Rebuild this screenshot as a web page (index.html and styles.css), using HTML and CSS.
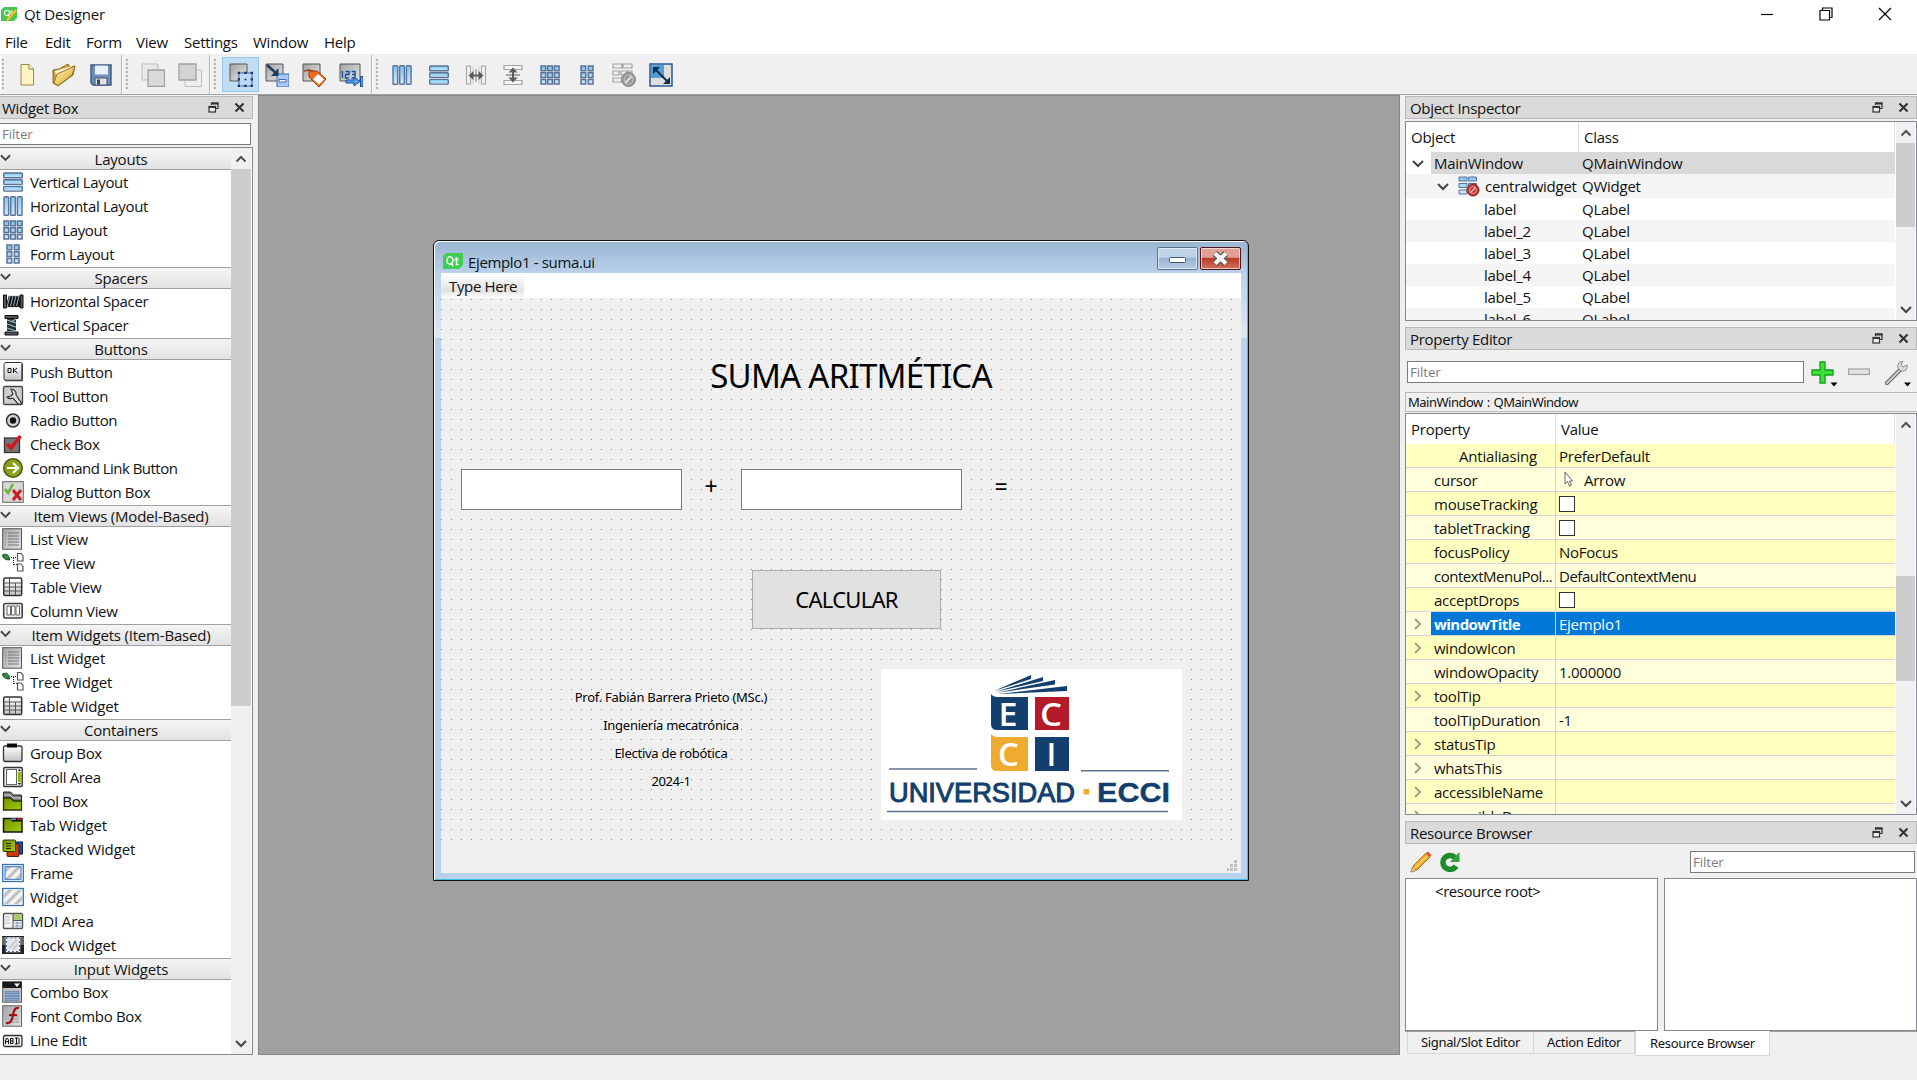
FILE: index.html
```html
<!DOCTYPE html>
<html lang="es">
<head>
<meta charset="utf-8">
<title>Qt Designer</title>
<link rel="stylesheet" href="styles.css">
</head>
<body>
<svg class="defs" width="0" height="0" aria-hidden="true">
  <defs>
    <linearGradient id="blue" x1="0" y1="0" x2="0" y2="1"><stop offset="0" stop-color="#7cc6f2"/><stop offset="1" stop-color="#cfeafb"/></linearGradient>
    <linearGradient id="grey" x1="0" y1="0" x2="1" y2="1"><stop offset="0" stop-color="#a4a4a4"/><stop offset="1" stop-color="#e4e4e4"/></linearGradient>
    <linearGradient id="light" x1="0" y1="0" x2="0" y2="1"><stop offset="0" stop-color="#fff"/><stop offset="1" stop-color="#c2c2c2"/></linearGradient>
    <linearGradient id="green" x1="0" y1="0" x2="1" y2="1"><stop offset="0" stop-color="#6f9400"/><stop offset="1" stop-color="#a5cc00"/></linearGradient>
    <linearGradient id="gold" x1="0" y1="0" x2="1" y2="1"><stop offset="0" stop-color="#fff3c0"/><stop offset="1" stop-color="#d9a520"/></linearGradient>
    <pattern id="hatch" width="7" height="7" patternUnits="userSpaceOnUse" patternTransform="rotate(45)"><rect width="7" height="7" fill="#f4f4f4"/><rect width="3.2" height="7" fill="#c0c0c0"/></pattern>
    <symbol id="vlay" viewBox="0 0 22 22"><g fill="url(#blue)" stroke="#5c7296" stroke-width="1.4"><rect x="1.700" y="2" width="18.600" height="4.700" rx=".8"/><rect x="1.700" y="8.700" width="18.600" height="4.700" rx=".8"/><rect x="1.700" y="15.400" width="18.600" height="4.700" rx=".8"/></g></symbol>
    <symbol id="hlay" viewBox="0 0 22 22"><g fill="url(#blue)" stroke="#5c7296" stroke-width="1.4"><rect x="2" y="1.700" width="4.700" height="18.600" rx=".8"/><rect x="8.700" y="1.700" width="4.700" height="18.600" rx=".8"/><rect x="15.400" y="1.700" width="4.700" height="18.600" rx=".8"/></g></symbol>
    <symbol id="glay" viewBox="0 0 22 22"><g fill="url(#blue)" stroke="#5c7296" stroke-width="1.5"><path d="M2 2h4.700v4.700H2zM8.700 2h4.700v4.700H8.700zM15.400 2h4.700v4.700h-4.700zM2 8.700h4.700v4.700H2zM8.700 8.700h4.700v4.700H8.700zM15.400 8.700h4.700v4.700h-4.700zM2 15.400h4.700v4.700H2zM8.700 15.400h4.700v4.700H8.700zM15.400 15.400h4.700v4.700h-4.700z"/></g></symbol>
    <symbol id="flay" viewBox="0 0 22 22"><g fill="url(#blue)" stroke="#5c7296" stroke-width="1.5"><path d="M5 2h4.700v4.700H5zM12.300 2H17v4.700h-4.700zM5 8.700h4.700v4.700H5zM12.300 8.700H17v4.700h-4.700zM5 15.400h4.700v4.700H5zM12.300 15.400H17v4.700h-4.700z"/></g></symbol>
    <symbol id="hspc" viewBox="0 0 22 22"><path d="M1.500 5h3v13h-3zM18 5h3v13h-3z" fill="#555" stroke="#111"/><path d="M5 17L8 6v11L11 6v11L14 6v11L17 6v11" fill="none" stroke="#111" stroke-width="2.600"/><path d="M5 17L8 6M8.500 16L11 6M11.500 16L14 6M14.500 16L17 6" stroke="#9db9c6"/></symbol>
    <symbol id="vspc" viewBox="0 0 22 22"><path d="M3 1.500h13v3H3zM3 18h13v3H3z" fill="#555" stroke="#111"/><path d="M5 5h9v12H5z" fill="#26323a"/><path d="M5 6l9 3M5 10l9 3M5 14l9 3M14 5l-5 3" stroke="#9db9c6" stroke-width="1.300"/></symbol>
    <symbol id="push" viewBox="0 0 22 22"><rect x="2" y="1.500" width="18.500" height="18" rx="2" fill="url(#light)" stroke="#333"/><path d="M20 3v16.500H3" fill="none" stroke="#444" stroke-width="1.500"/><path d="M6 7.500h3v4H6zM11.500 7v5M15 7l-3 2.500L15.500 12" fill="none" stroke="#111"/></symbol>
    <symbol id="tool" viewBox="0 0 22 22"><rect x="1.500" y="1.500" width="19" height="18" rx="1.500" fill="#cfcfcf" stroke="#444" stroke-width="1.300"/><path d="M9 4a5 5 0 0 1 5 6l6 9-4 0-5-6a5 5 0 0 1-6-1l4-1 2-2z" fill="#e4e4e4" stroke="#333" stroke-width="1.200"/></symbol>
    <symbol id="radio" viewBox="0 0 22 22"><circle cx="11" cy="11.500" r="6.500" fill="#d4d4d4" stroke="#333" stroke-width="1.500"/><circle cx="11" cy="11.500" r="3.200" fill="#151515"/></symbol>
    <symbol id="check" viewBox="0 0 22 22"><rect x="2.500" y="5" width="15" height="14.500" fill="#777" stroke="#333" stroke-width="1.300"/><path d="M5 11l4 4L18.500 3" fill="none" stroke="#d3161c" stroke-width="3.600"/></symbol>
    <symbol id="cmd" viewBox="0 0 22 22"><circle cx="11" cy="11" r="9.300" fill="#87a31b" stroke="#3c4d05" stroke-width="1.300"/><path d="M5 11h10M11 6l5 5-5 5" fill="none" stroke="#fff" stroke-width="2.200"/></symbol>
    <symbol id="dlg" viewBox="0 0 22 22"><rect x=".7" y=".7" width="20.600" height="20.600" fill="#d8d8d8" stroke="#666"/><path d="M3 8l3 4 5-9" fill="none" stroke="#67b42b" stroke-width="2.400"/><path d="M11 9l8 10M19 9l-8 10" stroke="#c91c26" stroke-width="3"/></symbol>
    <symbol id="list" viewBox="0 0 22 22"><rect x=".7" y=".7" width="18.800" height="20.500" fill="url(#grey)" stroke="#555"/><path d="M3 5h1M6 5h11M3 8h1M6 8h11M3 11h1M6 11h11M3 14h1M6 14h11M3 17h1M6 17h11" stroke="#777"/></symbol>
    <symbol id="tree" viewBox="0 0 22 22"><path d="M.5 3c4-2 7 0 7 5-4 0-7-2-7-5z" fill="#2d8f3c" stroke="#17491e"/><path d="M9 5.500h5M11.500 6v8M12 12.500h3" stroke="#222" stroke-dasharray="1 1"/><path d="M15.500 1.500h3.500l2 2.500v5h-5.500zM15.500 12h3.500l2 2.500v4.500h-5.500z" fill="#fff" stroke="#555" stroke-width="1.200"/></symbol>
    <symbol id="table" viewBox="0 0 22 22"><rect x="1.700" y="2" width="18" height="17.500" rx="1.500" fill="url(#light)" stroke="#333" stroke-width="1.500"/><path d="M2 7h17M7.500 2v17M13.500 7v12M2 11h17M2 15h17" stroke="#555"/></symbol>
    <symbol id="col" viewBox="0 0 22 22"><rect x="1.700" y="3.500" width="18.500" height="14.500" rx="1.500" fill="#eee" stroke="#444" stroke-width="1.600"/><path d="M5 6h3.500v9H5zM9.500 6h3.500v9H9.500zM14 6h3.500v9H14z" fill="#fff" stroke="#666"/></symbol>
    <symbol id="group" viewBox="0 0 22 22"><rect x="1.500" y="4" width="18.500" height="15.500" rx="1.500" fill="url(#light)" stroke="#333" stroke-width="1.300"/><rect x="5" y="1.500" width="10" height="4" fill="#0a0a0a"/></symbol>
    <symbol id="scroll" viewBox="0 0 22 22"><rect x="1.700" y="1.500" width="18.500" height="19" rx="1" fill="#eee" stroke="#333" stroke-width="1.400"/><rect x="4.500" y="3.500" width="10" height="15" fill="#fff" stroke="#666"/><rect x="16" y="6" width="2.800" height="10" fill="#8db600"/><path d="M16 5l1.400-2L19 5zM16 17l1.400 2L19 17z"/></symbol>
    <symbol id="toolbox" viewBox="0 0 22 22"><path d="M1.500 2h7l3 3h8v14.500h-18z" fill="#777" stroke="#222"/><path d="M1.500 8h7l3 3h8v9h-18z" fill="url(#green)" stroke="#263300" stroke-width="1.300"/><path d="M2 5h6l3 3h8" fill="none" stroke="#ddd"/></symbol>
    <symbol id="tab" viewBox="0 0 22 22"><rect x="1.500" y="4.500" width="18.500" height="13.500" fill="url(#green)" stroke="#111" stroke-width="1.500"/><path d="M8 4h12v3.500H10z" fill="#111"/><path d="M9 4.500h5V6H9z" fill="#5a9be0"/><path d="M15 4.500h5V6h-5z" fill="#d22"/></symbol>
    <symbol id="stack" viewBox="0 0 22 22"><rect x="12" y="4" width="8.500" height="12" fill="#1546b8" stroke="#0b1f52"/><rect x="5" y="6" width="12" height="12.500" rx="1" fill="#c63c06" stroke="#551a00"/><rect x="1" y="2" width="12.500" height="11.500" rx="1" fill="url(#green)" stroke="#2d3d00"/><path d="M4 5.500h5M4 8h5M4 10.500h5" stroke="#222"/></symbol>
    <symbol id="frame" viewBox="0 0 22 22"><rect x=".7" y="2.500" width="20.600" height="17" fill="#fff" stroke="#3172bd" stroke-width="1.300"/><rect x="3" y="4.700" width="16" height="12.600" fill="url(#hatch)" stroke="#3172bd"/></symbol>
    <symbol id="widget" viewBox="0 0 22 22"><rect x=".7" y="2.500" width="20.600" height="17" fill="#fff" stroke="#3172bd" stroke-width="1.300"/><rect x="2" y="3.800" width="18" height="14.400" fill="url(#hatch)"/></symbol>
    <symbol id="mdi" viewBox="0 0 22 22"><rect x="1.500" y="3.500" width="19" height="15" rx="1" fill="#f4f4f4" stroke="#555" stroke-width="1.400"/><path d="M11 4h9v6h-9z" fill="#a9cc6b"/><path d="M11 4v14M11 10.500h9" stroke="#555"/><path d="M3 7h5M3 10h5M3 13h5" stroke="#bbb"/><path d="M12.500 13h7M12.500 16h7M15 11.500v6" stroke="#7d9bd0"/></symbol>
    <symbol id="dock" viewBox="0 0 22 22"><rect y="2" width="22" height="18" fill="#222"/><path d="M0 3h22v8H0z" fill="#666"/><rect x="4.500" y="4" width="13" height="13.500" fill="#e6e6e6" stroke="#fff" stroke-width="1.500"/><path d="M7 14l8-8M11 15l5-5" stroke="#ccc" stroke-width="2"/><rect x="4.500" y="4" width="13" height="13.500" fill="none" stroke="#356eb5" stroke-dasharray="2 2"/></symbol>
    <symbol id="combo" viewBox="0 0 22 22"><rect x=".7" y=".7" width="18.800" height="20.500" fill="#bfbfbf" stroke="#555"/><path d="M.5 1h19v6H.5z" fill="#16191d"/><path d="M12 2.500h6l-3 3.500z" fill="#fff"/><path d="M3 10.500h14v2H3zM3 14h14v2H3zM3 17.500h14v2H3z" fill="#7fa7dd" stroke="#47699a" stroke-width=".5"/></symbol>
    <symbol id="fcombo" viewBox="0 0 22 22"><rect x=".7" y=".7" width="18.800" height="20.500" fill="url(#grey)" stroke="#666"/><path d="M3 11h14M3 14h14M3 17h14" stroke="#aaa" stroke-width="1.500"/><path d="M17 3c-4-1-5 2-6 7-1 6-3 9-7 8M7 10h8" fill="none" stroke="#9c1218" stroke-width="2.200"/></symbol>
    <symbol id="ledit" viewBox="0 0 22 22"><rect x="1.500" y="6.500" width="18.500" height="11" rx="1.500" fill="#eee" stroke="#333" stroke-width="1.300"/><path d="M3.500 15v-4l1.500-2 1.500 2v4M3.500 12.500h3M8.500 9.500v5M8.500 9.500h2.500v5H8.500M8.500 12H11M13 9h3M14.500 9v6M13 15h3M17 9v6" fill="none" stroke="#111"/></symbol>
    <symbol id="down" viewBox="0 0 12 8"><path d="M1 1l5 5 5-5" fill="none" stroke="#444" stroke-width="2"/></symbol>
    <symbol id="up" viewBox="0 0 12 8"><path d="M1.500 6.500L6 2l4.500 4.500" fill="none" stroke="#505050" stroke-width="2"/></symbol>
    <symbol id="right" viewBox="0 0 8 12"><path d="M1 1l5 5-5 5" fill="none" stroke="#a0a08a" stroke-width="2"/></symbol>
    <symbol id="float" viewBox="0 0 11 11"><path d="M3.500 3V1h6.500v5.500H8" fill="none" stroke="#333" stroke-width="1.200"/><path d="M3 1.500h7.500" stroke="#333" stroke-width="2"/><rect x="1" y="4.500" width="6.500" height="5.500" fill="#eee" stroke="#333" stroke-width="1.200"/><path d="M1 5h6.500" stroke="#333" stroke-width="2"/></symbol>
    <symbol id="close" viewBox="0 0 11 11"><path d="M1.500 1.500l8 8M9.500 1.500l-8 8" stroke="#333" stroke-width="2.100"/></symbol>
    <symbol id="new" viewBox="0 0 24 24"><path d="M6 1.500h8l4.500 4.500v16H6z" fill="#fff5c0" stroke="#a08a4a"/><path d="M14 1.500V6h4.500" fill="#fffdf0" stroke="#887239"/></symbol>
    <symbol id="open" viewBox="0 0 24 24"><path d="M1 7l6-1 9-5 2 3 5-1-2 9-15 11-5-3z" fill="#c9a03d" stroke="#8a6a1c"/><path d="M3 8l17-5-1 5L5 17z" fill="#fff6d8"/><path d="M2 20L5 11 23 3l-3 9L6 22.500z" fill="url(#gold)" stroke="#9b7820"/></symbol>
    <symbol id="save" viewBox="0 0 24 24"><path d="M2 2h20v20H4l-2-2z" fill="#6f8fb8" stroke="#3a5580" stroke-width="1.400"/><path d="M6 2.500h13v9H6z" fill="#e8f1f8"/><path d="M6 15h12v7H6z" fill="#e4e4e4" stroke="#3c5070"/><path d="M8 16.500h3v5H8z" fill="#37475e"/></symbol>
    <symbol id="front" viewBox="0 0 24 24"><path d="M1 1h16v16H1z" fill="#e9e9e9" stroke="#bdbdbd"/><path d="M7 7h16.500v16.500H7z" fill="#dadada" stroke="#a0a0a0" stroke-width="1.300"/></symbol>
    <symbol id="back" viewBox="0 0 24 24"><path d="M7 7h16.500v16.500H7z" fill="#eee" stroke="#bdbdbd"/><path d="M1 1h17v16H1z" fill="#d3d3d3" stroke="#a0a0a0" stroke-width="1.300"/></symbol>
    <symbol id="ewid" viewBox="0 0 24 24"><path d="M1 1h17v17H1z" fill="url(#grey)" stroke="#555"/><path d="M10 10h13v13H10z" fill="#bcd8fb" stroke="#356bb5"/><path d="M8.700 8.700h2.300v2.300H8.700zM15.300 8.700h2.300v2.300h-2.300zM21.700 8.700H24v2.300h-2.300zM8.700 15.300h2.300v2.300H8.700zM21.700 15.300H24v2.300h-2.300zM8.700 21.700h2.300V24H8.700zM15.300 21.700h2.300V24h-2.300zM21.700 21.700H24V24h-2.300z" fill="#17305c"/><path d="M15.700 15.700h1.600v1.600h-1.600z" fill="#123"/></symbol>
    <symbol id="esig" viewBox="0 0 24 24"><path d="M1 1h17v17H1z" fill="url(#grey)" stroke="#555"/><path d="M12 11h12v13H12z" fill="#a9c8f6" stroke="#3b6dba"/><path d="M14 16.500h7v2.500h-7z" fill="#fff" stroke="#3b6dba"/><path d="M2 2l10 9" stroke="#1d3c63" stroke-width="2.600"/><path d="M13.500 5v8H6z" fill="#1d3c63"/></symbol>
    <symbol id="ebud" viewBox="0 0 24 24"><path d="M1 1h17v17H1z" fill="url(#grey)" stroke="#555"/><path d="M2 8l5-1 10 3" fill="none" stroke="#8c4a26" stroke-width="1.400"/><path d="M7 8h8l9 8-7 8L7 14z" fill="#f26a22" stroke="#9d3b0c"/><path d="M16 11l6 5.500-5 5-6-5.500z" fill="#fff"/></symbol>
    <symbol id="etab" viewBox="0 0 24 24"><path d="M1 1h20v17H1z" fill="url(#grey)" stroke="#555"/><path d="M3.500 8v7M2.500 9h1M6.500 8.500h3.500v3H6.500V15H10M12.500 8.500H16V15h-3.500M13 11.500h3" fill="none" stroke="#1650a0" stroke-width="1.400"/><path d="M7 17h8v-3l6 4.500L15 23v-3H7zM21.500 13.500H24V24h-2.500z" fill="#5b9cf0" stroke="#174b94"/></symbol>
    <symbol id="hsplit" viewBox="0 0 22 22"><path d="M1.500 2h4v18h-4zM16.500 2h4v18h-4z" fill="#f4f4f4" stroke="#a6a6a6" stroke-width="1.200"/><path d="M8 2v18M14 2v18" stroke="#ccc"/><path d="M3.500 11.500l5-4.500v3.500h5V7l5 4.500-5 4.500v-3.500h-5V16zM10.600 5h.8v13h-.8z" fill="#5c5c5c"/></symbol>
    <symbol id="vsplit" viewBox="0 0 22 22"><path d="M2 1.500h18v4H2zM2 16.500h18v4H2z" fill="#f4f4f4" stroke="#a6a6a6" stroke-width="1.200"/><path d="M11 3.500l4.500 5H12v5h3.500L11 18.500l-4.500-5H10v-5H6.500zM4 10.600h14v.8H4z" fill="#5c5c5c"/></symbol>
    <symbol id="brk" viewBox="0 0 24 24"><path d="M1 1h9v4H1zM11 1h9v4h-9zM1 8h6v4H1zM9 8h6v4H9zM1 15h9v4H1zM16 8h4v4h-4z" fill="#eee" stroke="#a2a2a2" stroke-width="1.200"/><circle cx="16.500" cy="16.500" r="7" fill="#999" stroke="#868686"/><path d="M13 20l7-7" stroke="#ddd" stroke-width="2"/><circle cx="16.500" cy="16.500" r="4.500" fill="none" stroke="#c8c8c8"/></symbol>
    <symbol id="adj" viewBox="0 0 24 24"><path d="M1 1h22v22H1z" fill="#dedede" stroke="#245a92" stroke-width="1.500"/><path d="M2 2h13v13H2z" fill="#549fd2"/><path d="M7 7l12 12" stroke="#082e52" stroke-width="2"/><path d="M4 4h7l-7 7zM21 21v-7l-7 7z" fill="#082e52"/></symbol>
    <symbol id="cbrk" viewBox="0 0 22 22"><path d="M1 2h8v4H1zM10.500 2h8v4h-8zM1 8.500h8v4H1zM1 15h8v4H1zM10.500 8.500h8v4h-8z" fill="url(#blue)" stroke="#5c7296"/><circle cx="15" cy="15" r="6" fill="#c2342f" stroke="#852420"/><circle cx="15" cy="15" r="3.500" fill="none" stroke="#e9a19c"/><path d="M12.500 17.500l5-5" stroke="#eec0bc" stroke-width="1.500"/></symbol>
  </defs>
</svg>

<div class="app">
  <header class="titlebar">
    <svg class="app-icon" viewBox="0 0 17 15"><path d="M3 0h13v11l-3 3H0V3z" fill="#41c854"/><circle cx="6" cy="6" r="2.600" fill="none" stroke="#fff" stroke-width="1.300"/><path d="M7 8l1 1.500M10.500 3v6M9 5h3" stroke="#fff"/><path d="M5 14l1-3 8-9 2 2-8 9z" fill="#f1c232" stroke="#c69a28" stroke-width=".5"/></svg>
    <span class="app-name">Qt Designer</span>
    <div class="win-ctl">
      <svg viewBox="0 0 14 14"><path d="M1 7.500h12" stroke="#000" stroke-width="1.200"/></svg>
      <svg viewBox="0 0 14 14"><path d="M1 3.500h9.500V13H1zM3.500 3.500V1H13v9.500h-2.500" fill="none" stroke="#000" stroke-width="1.200"/></svg>
      <svg viewBox="0 0 14 14"><path d="M1 1l12 12M13 1L1 13" stroke="#000" stroke-width="1.200"/></svg>
    </div>
  </header>
  <nav class="menubar"><span class="m1">File</span><span class="m2">Edit</span><span class="m3">Form</span><span class="m4">View</span><span class="m5">Settings</span><span class="m6">Window</span><span>Help</span></nav>
  <div class="toolbar">
    <div class="tgroup g1"><i class="grip"></i><svg><use href="#new"/></svg><svg><use href="#open"/></svg><svg><use href="#save"/></svg></div>
    <div class="tgroup g2"><i class="grip"></i><svg><use href="#front"/></svg><svg><use href="#back"/></svg></div>
    <div class="tgroup g3"><i class="grip"></i><span class="sel"><svg><use href="#ewid"/></svg></span><svg><use href="#esig"/></svg><svg><use href="#ebud"/></svg><svg><use href="#etab"/></svg></div>
    <div class="tgroup g4"><i class="grip"></i><svg><use href="#hlay"/></svg><svg><use href="#vlay"/></svg><svg><use href="#hsplit"/></svg><svg><use href="#vsplit"/></svg><svg><use href="#glay"/></svg><svg><use href="#flay"/></svg><svg><use href="#brk"/></svg><svg><use href="#adj"/></svg></div>
  </div>

  <main class="work">
    <aside class="left">
      <div class="dock-title wb-title"><span>Widget Box</span><svg><use href="#float"/></svg><svg><use href="#close"/></svg></div>
      <div class="field wb-filter">Filter</div>
      <div class="wb">
        <div class="wb-list">
          <h3><svg><use href="#down"/></svg>Layouts</h3>
          <p><svg><use href="#vlay"/></svg>Vertical Layout</p>
          <p><svg><use href="#hlay"/></svg>Horizontal Layout</p>
          <p><svg><use href="#glay"/></svg>Grid Layout</p>
          <p><svg><use href="#flay"/></svg>Form Layout</p>
          <h3><svg><use href="#down"/></svg>Spacers</h3>
          <p><svg><use href="#hspc"/></svg>Horizontal Spacer</p>
          <p><svg><use href="#vspc"/></svg>Vertical Spacer</p>
          <h3><svg><use href="#down"/></svg>Buttons</h3>
          <p><svg><use href="#push"/></svg>Push Button</p>
          <p><svg><use href="#tool"/></svg>Tool Button</p>
          <p><svg><use href="#radio"/></svg>Radio Button</p>
          <p><svg><use href="#check"/></svg>Check Box</p>
          <p class="tight"><svg><use href="#cmd"/></svg>Command Link Button</p>
          <p><svg><use href="#dlg"/></svg>Dialog Button Box</p>
          <h3><svg><use href="#down"/></svg>Item Views (Model-Based)</h3>
          <p><svg><use href="#list"/></svg>List View</p>
          <p><svg><use href="#tree"/></svg>Tree View</p>
          <p><svg><use href="#table"/></svg>Table View</p>
          <p><svg><use href="#col"/></svg>Column View</p>
          <h3><svg><use href="#down"/></svg>Item Widgets (Item-Based)</h3>
          <p class="wide"><svg><use href="#list"/></svg>List Widget</p>
          <p class="wide"><svg><use href="#tree"/></svg>Tree Widget</p>
          <p class="wide"><svg><use href="#table"/></svg>Table Widget</p>
          <h3><svg><use href="#down"/></svg>Containers</h3>
          <p><svg><use href="#group"/></svg>Group Box</p>
          <p><svg><use href="#scroll"/></svg>Scroll Area</p>
          <p><svg><use href="#toolbox"/></svg>Tool Box</p>
          <p class="wide"><svg><use href="#tab"/></svg>Tab Widget</p>
          <p class="wide"><svg><use href="#stack"/></svg>Stacked Widget</p>
          <p><svg><use href="#frame"/></svg>Frame</p>
          <p class="wide"><svg><use href="#widget"/></svg>Widget</p>
          <p class="wide"><svg><use href="#mdi"/></svg>MDI Area</p>
          <p class="wide"><svg><use href="#dock"/></svg>Dock Widget</p>
          <h3><svg><use href="#down"/></svg>Input Widgets</h3>
          <p><svg><use href="#combo"/></svg>Combo Box</p>
          <p><svg><use href="#fcombo"/></svg>Font Combo Box</p>
          <p><svg><use href="#ledit"/></svg>Line Edit</p>
        </div>
        <div class="sbar"><svg><use href="#up"/></svg><i class="t-wb"></i><b></b><svg><use href="#down"/></svg></div>
      </div>
    </aside>

    <section class="canvas">
      <div class="subwin">
        <div class="sub-title">
          <svg class="qt" viewBox="0 0 20 16"><path d="M3 0h17v12l-4 4H0V3z" fill="#41cd52"/><ellipse cx="7" cy="7.500" rx="3" ry="3.700" fill="none" stroke="#fff" stroke-width="1.500"/><path d="M8 10l2 3M13.500 4v7.500h2M11.500 6.500h4" fill="none" stroke="#fff" stroke-width="1.500"/></svg>
          <span>Ejemplo1 - suma.ui</span>
          <div class="wbtn min"><svg viewBox="0 0 39 21"><rect x="11.500" y="9.500" width="16" height="5" rx="1" fill="#fff" stroke="#4e5866"/></svg></div>
          <div class="wbtn cls"><svg viewBox="0 0 39 21"><path d="M14 5.500l11 10M25 5.500l-11 10" stroke="#55535c" stroke-width="6.500"/><path d="M14 5.500l11 10M25 5.500l-11 10" stroke="#f4f4f4" stroke-width="4.300"/></svg></div>
        </div>
        <div class="form">
          <div class="form-menu"><span>Type Here</span></div>
          <div class="grid-area">
            <div class="f-title">SUMA ARITMÉTICA</div>
            <div class="inp in1"></div><div class="op plus">+</div>
            <div class="inp in2"></div><div class="op eq">=</div>
            <div class="calc">CALCULAR</div>
            <div class="credits"><div>Prof. Fabián Barrera Prieto (MSc.)</div><div>Ingeniería mecatrónica</div><div>Electiva de robótica</div><div class="yr">2024-1</div></div>
            <svg class="logo" viewBox="0 0 301 151">
              <rect width="301" height="151" fill="#fff"/>
              <g fill="#123f6e">
                <path d="M113 22l37-16v4zM114 23l48-15v4zM115 24l59-13v4.500zM117 25l69-8v5z"/>
                <path d="M110 25q2 3 7 3h30v33h-31q-6 0-6-6zM154 68h34v34h-34z"/>
              </g>
              <path d="M154 28h34v33h-34z" fill="#b51a29"/>
              <path d="M110 65q2 3 7 3h30v34h-31q-6 0-6-6z" fill="#efab30"/>
              <g class="lg-in"><text x="117.500" y="56.500" textLength="19" lengthAdjust="spacingAndGlyphs">E</text><text x="159" y="56.500" textLength="22" lengthAdjust="spacingAndGlyphs">C</text><text x="117" y="96.500" textLength="21" lengthAdjust="spacingAndGlyphs">C</text><text x="165.500" y="96.500">I</text></g>
              <path d="M8 100h88M200 101.700h88M6 142.500h281" stroke="#5d7590" stroke-width="1.600"/>
              <text class="lg-u" x="8" y="132.500" textLength="186" lengthAdjust="spacingAndGlyphs">UNIVERSIDAD</text>
              <rect x="202.500" y="120" width="5.500" height="5.500" fill="#efab30"/>
              <text class="lg-e" x="216" y="132.500" textLength="73" lengthAdjust="spacingAndGlyphs">ECCI</text>
            </svg>
          </div>
          <div class="form-status"><svg viewBox="0 0 11 11"><path d="M7 0h3v3H7zM7 4h3v3H7zM3 4h3v3H3zM7 8h3v3H7zM3 8h3v3H3zM0 8h2v3H0z" fill="#bfbfbf"/></svg></div>
        </div>
      </div>
    </section>

    <aside class="right">
      <div class="dock-title"><span>Object Inspector</span><svg><use href="#float"/></svg><svg><use href="#close"/></svg></div>
      <div class="box oi">
        <div class="tbl">
          <div class="oh"><span>Object</span><span>Class</span></div>
          <div class="or first"><svg><use href="#down"/></svg><span>MainWindow</span><em>QMainWindow</em></div>
          <div class="or cw alt"><svg class="ch"><use href="#down"/></svg><svg class="ic"><use href="#cbrk"/></svg><span>centralwidget</span><em>QWidget</em></div>
          <div class="or"><span>label</span><em>QLabel</em></div>
          <div class="or alt"><span>label_2</span><em>QLabel</em></div>
          <div class="or"><span>label_3</span><em>QLabel</em></div>
          <div class="or alt"><span>label_4</span><em>QLabel</em></div>
          <div class="or"><span>label_5</span><em>QLabel</em></div>
          <div class="or alt"><span>label_6</span><em>QLabel</em></div>
        </div>
        <div class="sbar"><svg><use href="#up"/></svg><i class="t-oi"></i><b></b><svg><use href="#down"/></svg></div>
      </div>

      <div class="dock-title pe-title"><span>Property Editor</span><svg><use href="#float"/></svg><svg><use href="#close"/></svg></div>
      <div class="pe-tools">
        <div class="field">Filter</div>
        <svg class="plus-i" viewBox="0 0 28 26"><path d="M9 1h5v8h8v5h-8v8H9v-8H1V9h8z" fill="#3ce03c" stroke="#12a012" stroke-width="1.300"/><path d="M19.500 21.500h7l-3.500 4z"/></svg>
        <svg class="minus-i" viewBox="0 0 22 8"><rect x=".7" y="1" width="20.600" height="5.500" fill="#e2e2e2" stroke="#a0a0a0" stroke-width="1.200"/></svg>
        <svg class="wr-i" viewBox="0 0 28 26"><path d="M3 22L17 8" stroke="#666" stroke-width="4" stroke-linecap="round"/><path d="M3 22L17 8" stroke="#cfcfcf" stroke-width="2" stroke-linecap="round"/><path d="M19 0c-3 0-6 3-5 7l3 3c4 1 7-2 6-6l-4 2-2-2z" fill="#ddd" stroke="#888"/><path d="M20 21.500h7l-3.500 4z"/></svg>
      </div>
      <div class="pe-obj">MainWindow : QMainWindow</div>
      <div class="box pe">
        <div class="tbl">
          <div class="ph"><span>Property</span><span>Value</span></div>
          <div class="pr y sub"><span>Antialiasing</span><em>PreferDefault</em></div>
          <div class="pr"><span>cursor</span><em><svg class="cur" viewBox="0 0 9 16"><path d="M1 1v12l2.500-2.500L5.500 15l2-1-2-4H8.500z" fill="#fff" stroke="#666"/></svg>Arrow</em></div>
          <div class="pr y"><span>mouseTracking</span><em><i></i></em></div>
          <div class="pr"><span>tabletTracking</span><em><i></i></em></div>
          <div class="pr y"><span>focusPolicy</span><em>NoFocus</em></div>
          <div class="pr cmp"><span>contextMenuPol...</span><em>DefaultContextMenu</em></div>
          <div class="pr y"><span>acceptDrops</span><em><i></i></em></div>
          <div class="pr x on"><svg class="ex"><use href="#right"/></svg><span>windowTitle</span><em>Ejemplo1</em></div>
          <div class="pr y x"><svg class="ex"><use href="#right"/></svg><span>windowIcon</span><em></em></div>
          <div class="pr"><span>windowOpacity</span><em>1.000000</em></div>
          <div class="pr y x"><svg class="ex"><use href="#right"/></svg><span>toolTip</span><em></em></div>
          <div class="pr"><span>toolTipDuration</span><em>-1</em></div>
          <div class="pr y x"><svg class="ex"><use href="#right"/></svg><span>statusTip</span><em></em></div>
          <div class="pr x"><svg class="ex"><use href="#right"/></svg><span>whatsThis</span><em></em></div>
          <div class="pr y x"><svg class="ex"><use href="#right"/></svg><span>accessibleName</span><em></em></div>
          <div class="pr x"><svg class="ex"><use href="#right"/></svg><span>accessibleDe...</span><em></em></div>
        </div>
        <div class="sbar"><svg><use href="#up"/></svg><u></u><i class="t-pe"></i><b></b><svg><use href="#down"/></svg></div>
      </div>

      <div class="dock-title rb-title"><span>Resource Browser</span><svg><use href="#float"/></svg><svg><use href="#close"/></svg></div>
      <div class="rb-tools">
        <svg class="pen" viewBox="0 0 22 22"><path d="M1 21l2-6L16 2l4 4L7 19z" fill="#efa829" stroke="#b0741a"/><path d="M5 17L17 5" stroke="#ffd877" stroke-width="1.500"/><path d="M16 2l2-1.500L21.500 4 20 6z" fill="#cf5a3e"/><path d="M1 21l1.500-5L6 19.500z" fill="#e9cfa0" stroke="#987040" stroke-width=".5"/></svg>
        <svg class="rel" viewBox="0 0 21 21"><path d="M16 6.500A7 7 0 1 0 17 15" fill="none" stroke="#1d8c2a" stroke-width="5.500"/><path d="M20.500 1v10H11z" fill="#35a03f"/></svg>
        <div class="field">Filter</div>
      </div>
      <div class="rb-panes"><div class="pane">&lt;resource root&gt;</div><div class="pane"></div></div>
      <div class="tabs"><span class="tb1">Signal/Slot Editor</span><span class="tb2">Action Editor</span><span class="act">Resource Browser</span></div>
    </aside>
  </main>
</div>
</body>
</html>
```
FILE: styles.css
```css
* { box-sizing: border-box; }
body { margin: 0; width: 1917px; height: 1080px; overflow: hidden; background: #f0f0f0; color: #111; font-family: "Open Sans", "Noto Sans", sans-serif; font-size: 15px; letter-spacing: -0.25px; }
svg { display: block; flex: none; }
h3, p { margin: 0; font: inherit; }
em { font-style: normal; }
.defs { position: absolute; }
.app { display: flex; flex-direction: column; height: 1080px; }
span, em, p, h3, .pane, .field { white-space: nowrap; }

/* title bar, menus, toolbar */
.titlebar { height: 30px; background: #fff; display: flex; align-items: center; padding: 0 0 2px 1px; flex: none; }
.app-icon { width: 17px; height: 15px; }
.app-name { margin-left: 6px; letter-spacing: -0.200px; }
.win-ctl { margin-left: auto; display: flex; gap: 45px; padding-right: 25px; }
.win-ctl svg { width: 14px; height: 14px; }
.menubar { height: 25px; background: #fff; border-bottom: 1px solid #ececec; display: flex; line-height: 24px; padding-left: 5px; flex: none; }
.m1 { width: 40px; } .m2 { width: 41px; } .m3 { width: 50px; } .m4 { width: 48px; } .m5 { width: 69px; } .m6 { width: 71px; }

.toolbar { height: 40px; display: flex; border-bottom: 1px solid #a5a5a5; flex: none; }
.tgroup { display: flex; align-items: center; border-right: 1px solid #b4b4b4; border-left: 1px solid #fff; }
.tgroup > svg { width: 24px; height: 24px; margin-right: 13px; }
.tgroup > svg:last-child { margin-right: 0; }
.grip { flex: none; width: 3px; height: 31px; margin-left: 1px; background: radial-gradient(circle at 1px 1px, #b0b0b0 1.1px, transparent 1.3px) 0 0 / 3px 4px; }
.g1 { width: 122px; } .g1 .grip { margin-right: 10px; }
.g2 { width: 88px; } .g2 .grip { margin-left: 3px; margin-right: 12px; }
.g3 { width: 162px; } .g3 .grip { margin-left: 3px; margin-right: 5px; }
.sel { flex: none; width: 37px; height: 35px; background: #c2dcf3; border: 1px solid #90c8f6; display: flex; align-items: center; justify-content: center; margin-right: 6px; }
.sel svg { width: 24px; height: 24px; }
.g4 { border-right: 0; } .g4 .grip { margin-left: 3px; margin-right: 12px; }
.g4 > svg { width: 22px; height: 22px; margin-right: 15px; }
.g4 > svg:nth-last-child(2) { width: 24px; height: 24px; margin: 0 13px 0 -1px; }
.g4 > svg:last-child { width: 24px; height: 24px; margin-right: 0; }

.work { flex: 1; display: flex; min-height: 0; }
.left { width: 258px; flex: none; }
.canvas { width: 1142px; height: 960px; background: #a0a0a0; border: 1px solid #828790; position: relative; flex: none; }
.right { width: 512px; margin-left: 5px; flex: none; }

/* dock widgets */
.dock-title { height: 23px; margin-top: 1px; background: #dadada; border: 1px solid #b9b9b9; display: flex; align-items: center; padding: 0 7px 0 4px; }
.dock-title span { flex: 1; line-height: 21px; padding-top: 2px; letter-spacing: -0.300px; }
.dock-title svg { width: 11px; height: 11px; }
.dock-title svg + svg { margin-left: 15px; }
.wb-title { width: 253px; border-left: 0; padding-left: 2px; }
.field { height: 22px; background: #fff; border: 1px solid #7a7a7a; color: #7c7c7c; font-size: 13.300px; line-height: 20px; padding-left: 2px; letter-spacing: -0.100px; }
.wb-filter { width: 251px; margin-top: 4px; border-left: 0; }
.wb { width: 253px; height: 908px; margin-top: 2px; background: #fff; border: 1px solid #828790; border-left: 0; display: flex; overflow: hidden; }
.wb-list { width: 231px; }
.wb-list h3 { height: 22px; margin-top: 1px; border-top: 1px solid #a0a0a0; border-bottom: 1px solid #a0a0a0; background: linear-gradient(#f5f5f5, #e2e2e2); display: flex; justify-content: center; line-height: 21px; padding-left: 11px; position: relative; letter-spacing: -0.200px; }
.wb-list h3:first-child { margin-top: 0; border-top-color: #f4f4f4; }
.wb-list h3 svg { position: absolute; left: 0; top: 5px; width: 11px; height: 8px; }
.wb-list p { height: 24px; display: flex; align-items: center; gap: 6px; padding-left: 2px; line-height: 24px; letter-spacing: -0.340px; }
.wb-list p.wide { letter-spacing: -0.150px; }
.wb-list p.tight { letter-spacing: -0.520px; }
.wb-list p svg { width: 22px; height: 22px; }
.sbar { width: 19px; margin-left: auto; background: #f0f0f0; display: flex; flex-direction: column; align-items: center; }
.wb .sbar { width: 20px; margin-right: 1px; }
.sbar svg { width: 12px; height: 8px; margin: 7px 0 6px; }
.sbar i { width: 100%; background: #cdcdcd; } .sbar b { flex: 1; }
.t-wb { height: 537px; } .t-oi { height: 84px; } .t-pe { height: 105px; }
.sbar u { height: 141px; }

/* edited form; its widgets sit freely on the grid */
.subwin { position: absolute; left: 174px; top: 144px; width: 816px; height: 641px; border: 1px solid #111; border-radius: 6px 6px 0 0; background: linear-gradient(#9ab5d3, #b9d1ea 32px) 0 0 / 100% 32px no-repeat, linear-gradient(#b9d1ea, #dce8f5) 0 32px / 100% 65px no-repeat, #b9d1ea; box-shadow: inset 1px 1px #fff, inset -1px -1px #39bfe0; padding: 0 7px; }
.sub-title { height: 32px; display: flex; align-items: flex-start; padding-left: 2px; }
.qt { width: 20px; height: 16px; margin-top: 12px; }
.sub-title span { margin: 11px auto 0 5px; line-height: 20px; letter-spacing: -0.350px; }
.wbtn { width: 41px; height: 23px; margin-top: 6px; border: 1px solid #5c7089; border-radius: 2px; box-shadow: inset 0 0 0 1px #ffffff99; background: linear-gradient(#bdd1e7 45%, #99b2d0 46%, #b4cce7); }
.wbtn svg { width: 39px; height: 21px; }
.cls { margin-left: 2px; border-color: #4b1620; background: linear-gradient(#e0a096 45%, #b83a24 46%, #d0705c); }
.form { height: 600px; background: #f0f0f0; width: 800px; }
.form-menu { height: 25px; background: #fff; }
.form-menu span { display: block; width: 83px; height: 24px; line-height: 26px; padding-left: 8px; background: linear-gradient(#fff, #e2e2e2 75%, #fafafa); letter-spacing: -0.350px; }
.grid-area { height: 542px; width: 791px; position: relative; background: conic-gradient(from 270deg at 1px 1px, #888 90deg, transparent 0) 0 1px / 10px 10px; font-family: "Noto Sans", "DejaVu Sans", sans-serif; }
.f-title { position: absolute; left: 240px; top: 55px; width: 340px; text-align: center; font-size: 33px; line-height: 45px; color: #000; letter-spacing: -0.740px; white-space: nowrap; }
.inp { position: absolute; top: 171px; width: 221px; height: 41px; background: #fff; border: 1px solid #7a7a7a; }
.in1 { left: 20px; } .in2 { left: 300px; }
.op { position: absolute; top: 172px; width: 30px; text-align: center; font-size: 23px; line-height: 32px; color: #000; }
.plus { left: 255px; } .eq { left: 545px; }
.calc { position: absolute; left: 311px; top: 272px; width: 189px; height: 59px; background: #e1e1e1; border: 1px solid #adadad; text-align: center; font-size: 22px; line-height: 56px; color: #000; letter-spacing: -0.750px; }
.credits { position: absolute; left: 100px; top: 385px; width: 260px; text-align: center; font-size: 13px; line-height: 28px; letter-spacing: -0.270px; color: #000; }
.credits .yr { letter-spacing: -0.400px; }
.logo { position: absolute; left: 440px; top: 371px; width: 301px; height: 151px; }
.lg-in { font: 600 32px "Open Sans", sans-serif; fill: #fff; letter-spacing: 0; }
.lg-u { font: 27px "Liberation Sans", sans-serif; fill: #123f6e; stroke: #123f6e; stroke-width: 1px; letter-spacing: 0; }
.lg-e { font: bold 28px "Liberation Sans", sans-serif; fill: #123f6e; stroke: #123f6e; stroke-width: .4px; letter-spacing: 0; }
.form-status { height: 33px; display: flex; justify-content: flex-end; padding: 20px 3px 0; }
.form-status svg { width: 11px; height: 11px; }

/* object inspector */
.box { background: #fff; border: 1px solid #828790; display: flex; overflow: hidden; }
.box .tbl { width: 489px; }
.box .sbar { margin-right: 1px; }
.oi { height: 200px; margin-top: 2px; }
.oh, .ph { display: flex; height: 30px; line-height: 31px; border-right: 1px solid #e0e0e0; }
.oh span, .ph span { padding-left: 5px; }
.oh span:first-child { width: 173px; border-right: 1px solid #e0e0e0; }
.or { height: 22px; display: flex; line-height: 23px; }
.or.alt { background: #f5f5f5; }
.or span { width: 98px; margin-left: 78px; }
.or.first { background: linear-gradient(90deg, #fff 25px, #d9d9d9 25px); }
.or.first svg { width: 12px; height: 8px; margin: 8px 0 0 6px; }
.or.first span { margin-left: 10px; width: 148px; }
.or.cw { height: 24px; line-height: 25px; }
.or.cw .ch { width: 12px; height: 8px; margin: 9px 0 0 31px; }
.or.cw .ic { width: 22px; height: 22px; margin: 1px 0 0 9px; }
.or.cw span { margin-left: 5px; width: 97px; }

/* property editor */
.pe-title { margin-top: 6px; }
.pe-tools { height: 42px; padding: 11px 0 0 2px; display: flex; }
.pe-tools .field { width: 397px; }
.plus-i { width: 28px; height: 26px; margin-left: 7px; }
.minus-i { width: 22px; height: 8px; margin: 7px 0 0 9px; }
.wr-i { width: 28px; height: 26px; margin-left: 14px; }
.pe-obj { height: 20px; border: 1px solid #b9b9b9; border-right: 0; font: 13px/18px "Noto Sans", sans-serif; padding-left: 2px; letter-spacing: -0.500px; word-spacing: 1px; }
.pe { height: 402px; margin-top: 1px; }
.ph span:first-child { width: 150px; border-right: 1px solid #e0e0e0; }
.pr { height: 24px; display: flex; background: #ffffdc; border-bottom: 1px solid #d4d4d4; line-height: 25px; }
.pr.y { background: #ffffbf; }
.pr span { width: 121px; margin-left: 28px; flex: none; }
.pr.sub span { width: 96px; margin-left: 53px; letter-spacing: -0.200px; }
.pr.cmp { letter-spacing: -0.480px; }
.pr em { flex: 1; border-left: 1px solid #d4d4d4; padding-left: 3px; display: flex; }
.pr em i { width: 16px; height: 16px; border: 1px solid #333; background: #fff; margin: 4px 0 0; }
.cur { width: 9px; height: 16px; margin: 3px 11px 0 5px; }
.ex { width: 8px; height: 12px; margin: 6px 0 0 8px; }
.pr.x span { margin-left: 9px; width: 124px; padding-left: 3px; }
.pr.on span { font-weight: bold; background: #0078d7; color: #fff; letter-spacing: -0.550px; }
.pr.on em { background: #0078d7; color: #fff; }

/* resource browser */
.rb-title { margin-top: 6px; }
.rb-tools { height: 34px; display: flex; padding: 7px 2px 0 5px; }
.pen { width: 22px; height: 22px; }
.rel { width: 21px; height: 21px; margin-left: 7px; }
.rb-tools .field { width: 225px; margin-left: auto; }
.rb-panes { display: grid; grid-template-columns: 253px 253px; gap: 6px; height: 153px; }
.pane { background: #fff; border: 1px solid #828790; padding-left: 29px; line-height: 24px; letter-spacing: -0.450px; }
.tabs { border-top: 1px solid #a0a0a0; display: flex; align-items: flex-start; padding-left: 2px; font: 13px/21px "Noto Sans", sans-serif; letter-spacing: -0.320px; height: 26px; }
.tabs span { border: 1px solid #d9d9d9; border-top: 0; text-align: center; height: 22px; }
.tb1 { width: 127px; } .tabs .tb2 { width: 101px; border-left: 0; }
.tabs .act { background: #fff; width: 135px; height: 25px; margin-top: -1px; line-height: 24px; }
```
